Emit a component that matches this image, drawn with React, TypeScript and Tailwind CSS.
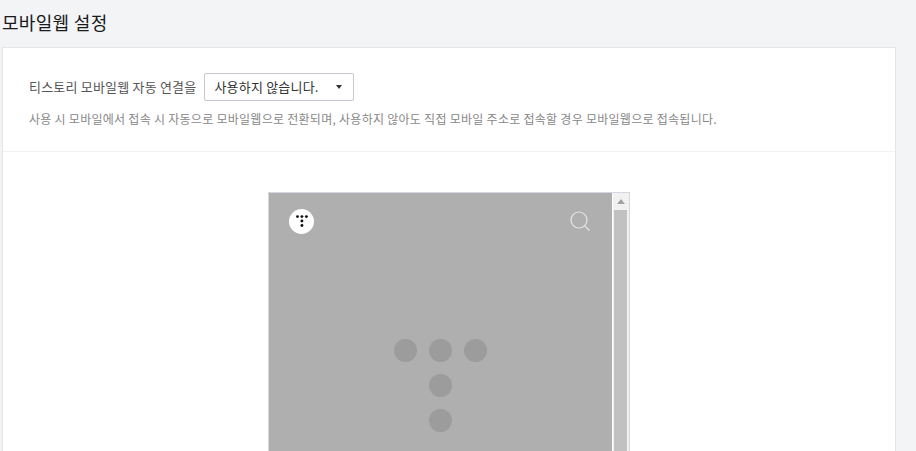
import React from 'react';

const font = { fontFamily: '"Noto Sans CJK KR", "Noto Sans", sans-serif' };

const TistoryMark: React.FC<{ className: string; fill: string }> = ({ className, fill }) => (
  <svg viewBox="0.5 -0.5 94 94" className={className} fill={fill}>
    <circle cx="12" cy="12" r="11.5" />
    <circle cx="47" cy="12" r="11.5" />
    <circle cx="82" cy="12" r="11.5" />
    <circle cx="47" cy="47" r="11.5" />
    <circle cx="47" cy="82" r="11.5" />
  </svg>
);

const App: React.FC = () => {
  return (
    <div className="h-[451px] w-[916px] overflow-hidden bg-[#f3f4f6] text-[#333]" style={font}>
      <h2 className="pl-[2px] pt-[9px] h-[47px] text-[18px] leading-[27px] font-normal tracking-[0.3px] text-[#1a1a1a]">모바일웹 설정</h2>

      <div className="ml-[2px] w-[894px] h-[500px] bg-white border border-[#e3e5e9]">
        {/* Setting */}
        <div className="h-[104px] px-[26px] pt-[25px] border-b border-[#f1f2f4]">
          <div className="flex items-center h-[28px]">
            <span className="text-[13px] tracking-[0.2px] text-[#555]">티스토리 모바일웹 자동 연결을</span>
            <button className="ml-[8px] flex items-center w-[150px] h-[28px] pl-[9px] pr-[11px] bg-white border border-[#c5c8d0] rounded-[2px] text-[13px] tracking-[0.2px] text-[#333]">
              <span className="flex-1 text-left">사용하지 않습니다.</span>
              <span className="w-0 h-0 border-x-[3.5px] border-x-transparent border-t-[4px] border-t-[#333]" />
            </button>
          </div>
          <p className="mt-[9px] text-[12px] leading-[18px] tracking-[0.27px] text-[#888] whitespace-nowrap">
            사용 시 모바일에서 접속 시 자동으로 모바일웹으로 전환되며, 사용하지 않아도 직접 모바일 주소로 접속할 경우 모바일웹으로 접속됩니다.
          </p>
        </div>

        {/* Preview */}
        <div className="flex justify-center pt-[40px]">
          <div className="flex w-[362px] h-[300px] border border-[#d5d6de] bg-white">
            <div className="w-[343px] h-full bg-[#afafaf] flex flex-col shrink-0">
              <div className="flex items-center justify-between h-[56px] pl-[20px] pr-[21px]">
                <div className="flex items-center justify-center w-[25px] h-[25px] rounded-full bg-white">
                  <TistoryMark className="w-[12px] h-[12px]" fill="#111" />
                </div>
                <svg viewBox="0 0 22 22" className="w-[22px] h-[22px]" fill="none" stroke="#e6e6e6" strokeWidth="1.2">
                  <circle cx="10" cy="10" r="8" />
                  <path d="M15.8 15.8 L20.5 20.5" />
                </svg>
              </div>
              <div className="flex justify-center pt-[89px]">
                <TistoryMark className="w-[94px] h-[94px]" fill="#9c9c9c" />
              </div>
            </div>
            <div className="flex-1 ml-[1px] bg-[#f1f1f1] flex flex-col">
              <div className="h-[17px] w-full flex items-center justify-center">
                <span className="w-0 h-0 border-x-[4px] border-x-transparent border-b-[5px] border-b-[#a3a3a3]" />
              </div>
              <div className="ml-[1px] w-[13px] flex-1 bg-[#c1c1c1]" />
            </div>
          </div>
        </div>
      </div>
    </div>
  );
};

export default App;
